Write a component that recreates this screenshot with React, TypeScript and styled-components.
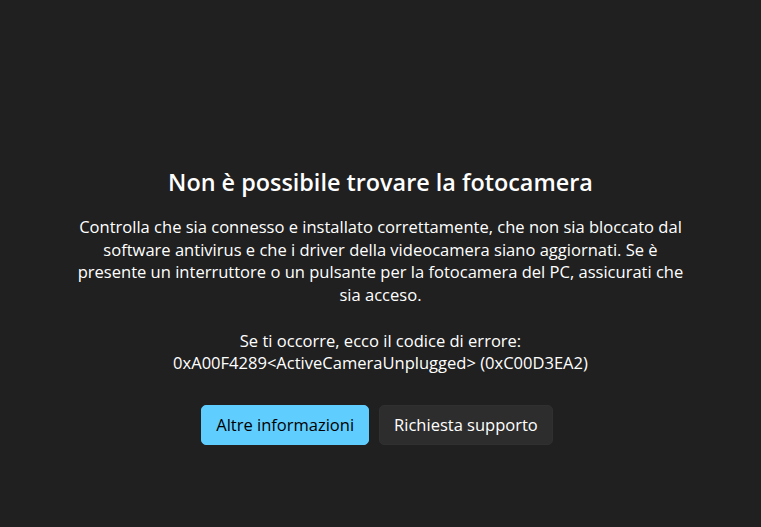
import React from "react";
import styled, { createGlobalStyle } from "styled-components";

const Global = createGlobalStyle`
  html, body { margin: 0; padding: 0; background: #202020; }
  body { font-family: "Open Sans", "Noto Sans", sans-serif; }
`;

const Page = styled.div`
  width: 761px;
  height: 527px;
  background: #202020;
  color: #ffffff;
  display: flex;
  flex-direction: column;
  align-items: center;
  padding-top: 168px;
  box-sizing: border-box;
`;

const Title = styled.h1`
  margin: 0;
  font-size: 23.4px;
  font-weight: 600;
  line-height: 28px;
  color: #ffffff;
`;

const Body = styled.p`
  margin: 20px 0 0;
  font-size: 16.55px;
  line-height: 22.7px;
  text-align: center;
  white-space: nowrap;
  color: #ffffff;
`;

const Actions = styled.div`
  display: flex;
  gap: 10px;
  margin-top: 30px;
  margin-right: 7px;
`;

const Button = styled.button<{ $primary?: boolean }>`
  height: 40px;
  padding: 0 14px;
  border-radius: 5px;
  font-family: inherit;
  font-size: 16.5px;
  cursor: pointer;
  border: 1px solid ${(p) => (p.$primary ? "#60cdff" : "#303030")};
  background: ${(p) => (p.$primary ? "#60cdff" : "#2d2d2d")};
  color: ${(p) => (p.$primary ? "#000000" : "#ffffff")};
`;

export default function App() {
  return (
    <>
      <Global />
      <Page>
        <Title>Non è possibile trovare la fotocamera</Title>
        <Body>
          Controlla che sia connesso e installato correttamente, che non sia bloccato dal
          <br />
          software antivirus e che i driver della videocamera siano aggiornati. Se è
          <br />
          presente un interruttore o un pulsante per la fotocamera del PC, assicurati che
          <br />
          sia acceso.
          <br />
          <br />
          Se ti occorre, ecco il codice di errore:
          <br />
          0xA00F4289&lt;ActiveCameraUnplugged&gt; (0xC00D3EA2)
        </Body>
        <Actions>
          <Button $primary>Altre informazioni</Button>
          <Button>Richiesta supporto</Button>
        </Actions>
      </Page>
    </>
  );
}
